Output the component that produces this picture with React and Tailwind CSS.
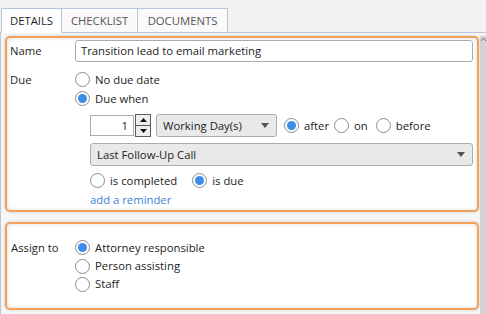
import React from 'react';

const Radio = ({ checked, label, className = '' }) => (
  <label className={`flex items-center gap-[5px] ${className}`}>
    <span className="w-[15px] h-[15px] rounded-full border border-[#8c8c8c] bg-white flex items-center justify-center shrink-0">
      {checked && <span className="w-[9px] h-[9px] rounded-full bg-[#3d8ce8]" />}
    </span>
    <span className="text-[#222]">{label}</span>
  </label>
);

const Caret = () => (
  <svg width="8" height="5" viewBox="0 0 8 5" className="shrink-0">
    <path d="M0 0h8L4 5z" fill="#555" />
  </svg>
);

const Tab = ({ label, active, w }) => (
  <div
    className={`h-[25px] flex items-center justify-center border border-[#b7c6d8] -ml-px first:ml-0 ${w} ${
      active ? 'bg-white text-[#1e1e1e] border-b-white' : 'bg-[#fafafa] text-[#555] border-b-[#b7c6d8]'
    }`}
  >
    {label}
  </div>
);

const App = () => {
  return (
    <div
      className="w-[486px] h-[314px] overflow-hidden bg-[#f2f2f2] flex flex-col text-[11.3px] leading-none"
      style={{ fontFamily: '"Open Sans", "Noto Sans", sans-serif' }}
    >
      {/* tabs */}
      <div className="flex pt-[8px] pl-[1px] relative z-10">
        <Tab label="DETAILS" active w="w-[61px]" />
        <Tab label="CHECKLIST" w="w-[77px]" />
        <Tab label="DOCUMENTS" w="w-[91px]" />
      </div>

      <div className="flex-1 flex -mt-px border-t border-l border-[#b7c6d8] bg-[#f6f6f6]">
        <div className="flex-1 flex flex-col gap-[10px] pl-[4px] pr-[1px] pt-[3px]">
          {/* box 1 */}
          <div className="h-[176px] shrink-0 rounded-[5px] border-2 border-[#f5a15a] bg-white shadow-[0_0_3px_rgba(0,0,0,0.18),inset_0_0_4px_rgba(0,0,0,0.14)] pl-[3px] pr-[4px] pt-[2px] flex flex-col">
            <div className="flex items-center h-[22px]">
              <div className="w-[65px] text-[#1e1e1e]">Name</div>
              <div className="flex-1 h-[22px] border border-[#ababab] rounded-[3px] bg-white flex items-center px-[5px] text-[#222]">
                Transition lead to email marketing
              </div>
            </div>

            <div className="flex mt-[8px]">
              <div className="w-[65px] h-[19px] flex items-center text-[#1e1e1e]">Due</div>
              <div className="flex-1 flex flex-col">
                <Radio label="No due date" className="h-[19px]" />
                <Radio label="Due when" checked className="h-[19px]" />

                <div className="flex items-center mt-[6px] pl-[15px] h-[23px]">
                  <div className="w-[44px] h-[21px] border border-[#ababab] bg-white flex items-center justify-end pr-[5px] text-[#222]">
                    1
                  </div>
                  <div className="flex flex-col w-[16px] h-[23px] ml-[1px]">
                    <div className="flex-1 border border-[#5a5a5a] bg-[#eeeeee] flex items-center justify-center">
                      <svg width="7" height="4" viewBox="0 0 7 4"><path d="M0 4h7L3.5 0z" fill="#111" /></svg>
                    </div>
                    <div className="flex-1 border border-t-0 border-[#5a5a5a] bg-[#eeeeee] flex items-center justify-center">
                      <svg width="7" height="4" viewBox="0 0 7 4"><path d="M0 0h7L3.5 4z" fill="#111" /></svg>
                    </div>
                  </div>
                  <div className="ml-[5px] w-[121px] h-[23px] border border-[#adadad] rounded-[3px] bg-[#e9e9e9] flex items-center justify-between pl-[6px] pr-[7px] text-[#222]">
                    Working Day(s)
                    <Caret />
                  </div>
                  <Radio label="after" checked className="ml-[7px]" />
                  <Radio label="on" className="ml-[5px]" />
                  <Radio label="before" className="ml-[8px]" />
                </div>

                <div className="mt-[6px] ml-[15px] h-[23px] border border-[#adadad] rounded-[3px] bg-[#e9e9e9] flex items-center justify-between pl-[6px] pr-[7px] text-[#222]">
                  Last Follow-Up Call
                  <Caret />
                </div>

                <div className="flex items-center h-[19px] mt-[5px] pl-[15px]">
                  <Radio label="is completed" />
                  <Radio label="is due" checked className="ml-[15px]" />
                </div>
                <div className="h-[19px] flex items-center pl-[15px] text-[#3b7fd6]">add a reminder</div>
              </div>
            </div>
          </div>

          {/* box 2 */}
          <div className="h-[88px] shrink-0 rounded-[5px] border-2 border-[#f5a15a] bg-white shadow-[0_0_3px_rgba(0,0,0,0.18),inset_0_0_4px_rgba(0,0,0,0.14)] pl-[4px] pt-[14px] flex">
            <div className="w-[64px] h-[19px] flex items-center text-[#1e1e1e]">Assign to</div>
            <div className="flex flex-col">
              <Radio label="Attorney responsible" checked className="h-[19px]" />
              <Radio label="Person assisting" className="h-[18px]" />
              <Radio label="Staff" className="h-[18px]" />
            </div>
          </div>
        </div>

        {/* scrollbar */}
        <div className="w-[6px] mt-[3px] bg-[#d2d2d2] flex flex-col items-center pt-[2px]">
          <svg width="5" height="3" viewBox="0 0 5 3"><path d="M0 3L2.5 0 5 3" fill="none" stroke="#777" /></svg>
        </div>
      </div>
    </div>
  );
};

export default App;
